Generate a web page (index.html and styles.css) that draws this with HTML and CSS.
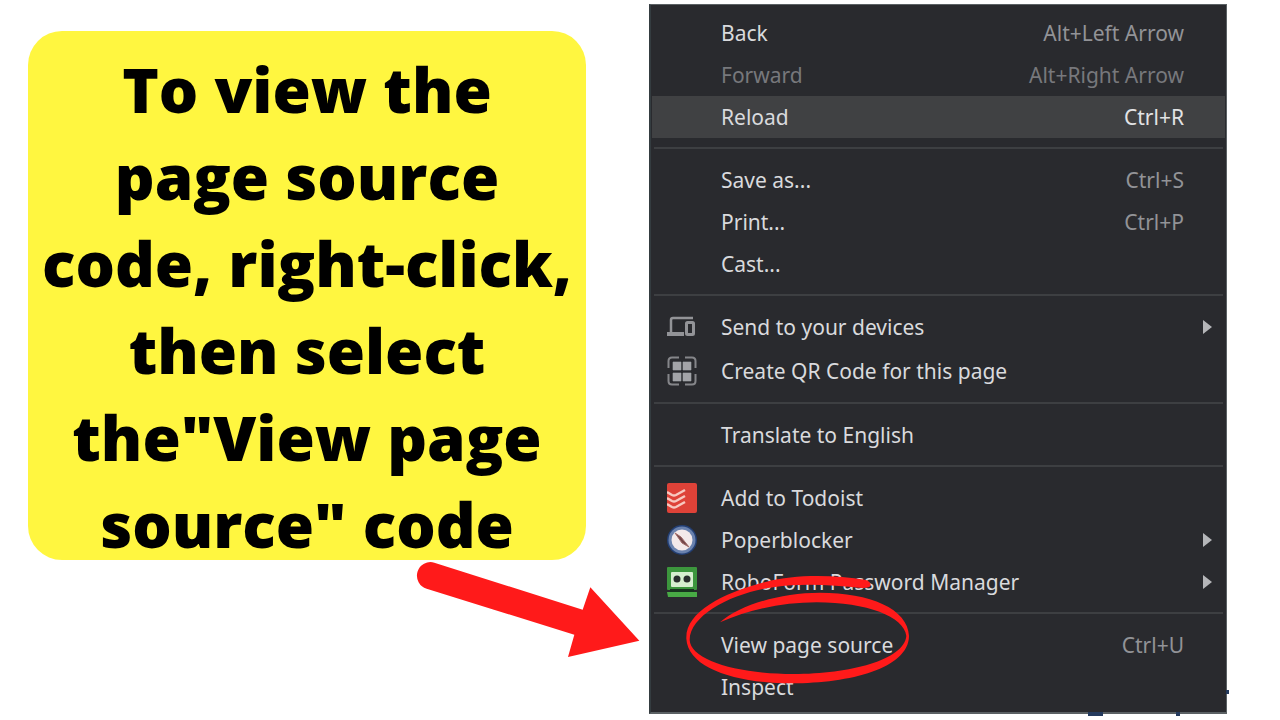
FILE: index.html
```html
<!DOCTYPE html>
<html lang="en">
<head>
<meta charset="utf-8">
<title>View page source</title>
<link rel="stylesheet" href="styles.css">
</head>
<body>
<main class="page">
  <h1 class="note">To view the page source code, right-click, then select the"View page source" code</h1>
  <div class="menu-area">
    <div class="menu" role="menu">
      <div class="group">
        <button class="item" role="menuitem"><span class="label">Back</span><kbd>Alt+Left Arrow</kbd></button>
        <button class="item" role="menuitem" disabled><span class="label">Forward</span><kbd>Alt+Right Arrow</kbd></button>
        <button class="item active" role="menuitem"><span class="label">Reload</span><kbd>Ctrl+R</kbd></button>
      </div>
      <div class="group">
        <button class="item" role="menuitem"><span class="label">Save as...</span><kbd>Ctrl+S</kbd></button>
        <button class="item" role="menuitem"><span class="label">Print...</span><kbd>Ctrl+P</kbd></button>
        <button class="item" role="menuitem"><span class="label">Cast...</span></button>
      </div>
      <div class="group roomy">
        <button class="item" role="menuitem">
          <svg class="icon" viewBox="0 0 30 30" fill="none" stroke="#929397"><path d="M4 21V8q0-2 2-2h20" stroke-width="2.500"/><path d="M0 22h17" stroke-width="4"/><rect x="19.500" y="10.500" width="7" height="12" rx="1" stroke-width="3"/></svg>
          <span class="label">Send to your devices</span><span class="more"></span>
        </button>
        <button class="item" role="menuitem">
          <svg class="icon" viewBox="0 0 30 30"><path d="M12 1.500H5Q1.500 1.500 1.500 5v7M18 1.500h7q3.500 0 3.500 3.500v7M1.500 18v7q0 3.500 3.500 3.500h7M28.500 18v7q0 3.500-3.500 3.500h-7" fill="none" stroke="#85868a" stroke-width="2"/><path d="M6 6h8v8H6zM16 6h8v8h-8zM6 17h8v8H6zM16 17h8v8h-8z" fill="#a3a4a8" stroke="#a3a4a8" stroke-width=".6"/></svg>
          <span class="label">Create QR Code for this page</span>
        </button>
      </div>
      <div class="group">
        <button class="item" role="menuitem"><span class="label">Translate to English</span></button>
      </div>
      <div class="group">
        <button class="item" role="menuitem">
          <svg class="icon" viewBox="0 0 30 30"><rect width="30" height="30" rx="2" fill="#de4238"/><path d="M0 9l5 3q2 1 4 0l9-5M0 15l5 3q2 1 4 0l9-5M0 21l5 3q2 1 4 0l9-5" fill="none" stroke="#f7c9c0" stroke-width="2.500"/></svg>
          <span class="label">Add to Todoist</span>
        </button>
        <button class="item" role="menuitem">
          <svg class="icon" viewBox="0 0 30 30"><circle cx="15" cy="15" r="15" fill="#233f74"/><circle cx="15" cy="15" r="13.500" fill="#6a82ae"/><circle cx="15" cy="15" r="10.500" fill="#f3e9ea"/><path d="M8 8l6 4 8 10-7-4z" fill="#724549" stroke="#a16c69" stroke-width="1"/></svg>
          <span class="label">Poperblocker</span><span class="more"></span>
        </button>
        <button class="item" role="menuitem">
          <svg class="icon" viewBox="0 0 30 30"><rect width="30" height="23" rx="1" fill="#3c963d"/><rect x="4" y="5" width="22" height="15" rx="1" fill="#d6efcf"/><circle cx="10" cy="12" r="3.500" fill="#292e2d"/><circle cx="20" cy="12" r="3.500" fill="#292e2d"/><path d="M3 22h24v3H3z" fill="#17351f"/><path d="M0 25h30v5H1z" fill="#48aa45"/></svg>
          <span class="label">RoboForm Password Manager</span><span class="more"></span>
        </button>
      </div>
      <div class="group">
        <button class="item" role="menuitem"><span class="label">View page source</span><kbd>Ctrl+U</kbd>
          <svg class="ring" viewBox="0 0 780 480" aria-hidden="true"><path fill="#ff1a1a" d="M588 60C490 43 370 43 290 65C160 98 46 156 49 236C54 325 200 370 365 370C540 370 716 325 717 228C714 146 600 98 450 98C330 98 210 135 150 187C240 148 340 127 440 127C590 127 703 170 709 228C702 300 540 342 370 342C200 342 62 300 59 240C60 164 190 98 310 82C400 68 490 76 575 84Q600 85 602 76Q602 66 588 60Z"/></svg>
        </button>
        <button class="item" role="menuitem"><span class="label">Inspect</span></button>
      </div>
    </div>
    <svg class="arrow" viewBox="0 0 780 390" aria-hidden="true"><path fill="#ff1a1a" d="M103 68L548 209L571 142L718 302L504 351L523 284L80 146A40 40 0 0 1 103 68Z"/></svg>
    <span class="speck speck-wide"></span>
    <span class="speck speck-small"></span>
    <span class="speck speck-side"></span>
  </div>
</main>
</body>
</html>
```
FILE: styles.css
```css
* {
  box-sizing: border-box;
}

body {
  margin: 0;
  background: #fff;
}

.page {
  display: grid;
  grid-template-columns: 558fr 578fr;
  column-gap: 63px;
  align-items: start;
  padding: 4px 53px 5px 28px;
}

.note {
  margin: 27px 0 0;
  padding: 15px 12px 0;
  height: 529px;
  border-radius: 34px;
  background: #fff640;
  color: #000;
  font: 800 62px/87px "Open Sans", sans-serif;
  text-align: center;
}

.menu-area {
  position: relative;
}

.menu {
  padding: 7px 1px 4px;
  border: 1px solid #5b6164;
  border-left: 2px solid #343c40;
  border-bottom-width: 2px;
  background: #292a2e;
}

.group + .group::before {
  content: "";
  display: block;
  height: 2px;
  margin: 9px 2px 10px;
  background: #3d3f42;
}

.item {
  position: relative;
  display: flex;
  align-items: center;
  width: 100%;
  height: 42px;
  padding: 0 41px 1px 69px;
  border: 0;
  background: transparent;
  color: #d9dadd;
  font: 400 21px/30px "Noto Sans", sans-serif;
  text-align: left;
}

.roomy .item {
  height: 43px;
}

.roomy .item + .item {
  margin-top: 1px;
}

.item.active {
  background: #404143;
}

.label {
  flex: 1;
  white-space: nowrap;
}

.item kbd {
  color: #929397;
  font: inherit;
}

.item.active kbd {
  color: #e2e3e5;
}

.item:disabled,
.item:disabled kbd {
  color: #77787c;
}

.icon {
  position: absolute;
  left: 15px;
  width: 30px;
  height: 30px;
}

.more {
  position: absolute;
  right: 13px;
  border: solid transparent;
  border-width: 7px 0 7px 9px;
  border-left-color: #b5b6b9;
}

.ring {
  position: absolute;
  z-index: 1;
  top: -64px;
  left: 18px;
  width: 260px;
  height: 160px;
  pointer-events: none;
}

.arrow {
  position: absolute;
  top: 536px;
  right: 100%;
  width: 260px;
  height: 130px;
  margin-right: -11px;
}

.speck {
  position: absolute;
  background: #243a5d;
}

.speck-wide {
  right: 124px;
  bottom: -2px;
  width: 15px;
  height: 4px;
}

.speck-small {
  right: 47px;
  bottom: -2px;
  width: 4px;
  height: 4px;
}

.speck-side {
  right: -2px;
  bottom: 20px;
  width: 3px;
  height: 4px;
}
```
